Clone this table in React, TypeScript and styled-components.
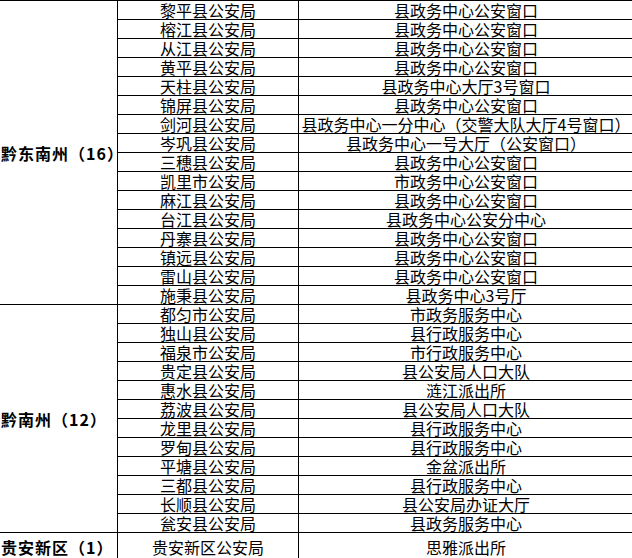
import React from "react";
import styled, { createGlobalStyle } from "styled-components";

const Global = createGlobalStyle`
  html, body { margin: 0; padding: 0; background: #fff; overflow: hidden; }
  body { font-family: "Noto Sans CJK SC", "Liberation Serif", sans-serif; color: #000; }
`;

const Table = styled.div`
  width: 634px;
  display: flex;
  flex-direction: column;
`;

const Group = styled.div`
  display: flex;
`;

const Label = styled.div`
  flex: none;
  width: 118px;
  box-sizing: border-box;
  border-top: 1px solid #000;
  border-right: 1px solid #000;
  display: flex;
  align-items: center;
  padding-left: 1px;
  font-size: 16px;
  line-height: 18px;
  font-weight: 700;
  white-space: nowrap;
  letter-spacing: 1px;
`;

const Rows = styled.div`
  flex: 1;
  display: flex;
  flex-direction: column;
`;

const Row = styled.div<{ $h: number }>`
  display: grid;
  grid-template-columns: 181px 1fr;
  height: ${(p) => p.$h}px;
  box-sizing: border-box;
  border-top: 1px solid #000;
`;

const Cell = styled.div<{ $plain?: boolean }>`
  display: flex;
  align-items: center;
  justify-content: center;
  font-size: 16px;
  line-height: 18px;
  white-space: nowrap;
  border-right: 1px solid #000;
  text-decoration: ${(p) => (p.$plain ? "none" : "underline")};
  text-decoration-thickness: 1px;
  text-underline-offset: 2px;
`;

type Item = [string, string];

const groups: { label: string; items: Item[]; h: number; plain?: boolean }[] = [
  {
    label: "黔东南州（16）",
    h: 19,
    items: [
      ["黎平县公安局", "县政务中心公安窗口"],
      ["榕江县公安局", "县政务中心公安窗口"],
      ["从江县公安局", "县政务中心公安窗口"],
      ["黄平县公安局", "县政务中心公安窗口"],
      ["天柱县公安局", "县政务中心大厅3号窗口"],
      ["锦屏县公安局", "县政务中心公安窗口"],
      ["剑河县公安局", "县政务中心一分中心（交警大队大厅4号窗口）"],
      ["岑巩县公安局", "县政务中心一号大厅（公安窗口）"],
      ["三穗县公安局", "县政务中心公安窗口"],
      ["凯里市公安局", "市政务中心公安窗口"],
      ["麻江县公安局", "县政务中心公安窗口"],
      ["台江县公安局", "县政务中心公安分中心"],
      ["丹寨县公安局", "县政务中心公安窗口"],
      ["镇远县公安局", "县政务中心公安窗口"],
      ["雷山县公安局", "县政务中心公安窗口"],
      ["施秉县公安局", "县政务中心3号厅"],
    ],
  },
  {
    label: "黔南州（12）",
    h: 19,
    items: [
      ["都匀市公安局", "市政务服务中心"],
      ["独山县公安局", "县行政服务中心"],
      ["福泉市公安局", "市行政服务中心"],
      ["贵定县公安局", "县公安局人口大队"],
      ["惠水县公安局", "涟江派出所"],
      ["荔波县公安局", "县公安局人口大队"],
      ["龙里县公安局", "县行政服务中心"],
      ["罗甸县公安局", "县行政服务中心"],
      ["平塘县公安局", "金盆派出所"],
      ["三都县公安局", "县行政服务中心"],
      ["长顺县公安局", "县公安局办证大厅"],
      ["瓮安县公安局", "县政务服务中心"],
    ],
  },
  {
    label: "贵安新区（1）",
    h: 28,
    plain: true,
    items: [["贵安新区公安局", "思雅派出所"]],
  },
];

export default function App() {
  return (
    <>
      <Global />
      <Table>
        {groups.map((g) => (
          <Group key={g.label}>
            <Label>{g.label}</Label>
            <Rows>
              {g.items.map(([a, b], i) => (
                <Row key={i} $h={g.h}>
                  <Cell $plain={g.plain}>{a}</Cell>
                  <Cell $plain={g.plain}>{b}</Cell>
                </Row>
              ))}
            </Rows>
          </Group>
        ))}
      </Table>
    </>
  );
}
